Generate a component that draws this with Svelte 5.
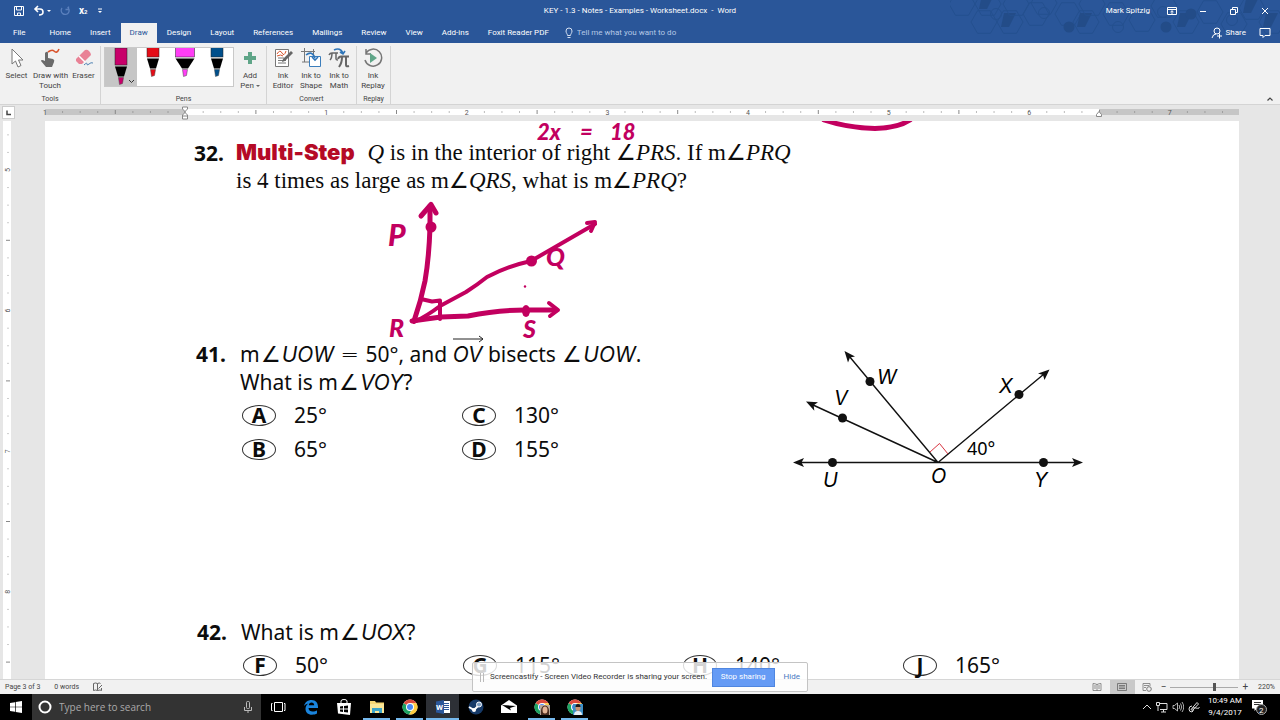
<script>
  const tabs = ['File', 'Home', 'Insert', 'Draw', 'Design', 'Layout', 'References', 'Mailings', 'Review', 'View', 'Add-ins', 'Foxit Reader PDF'];
  const pens = [
    { name: 'Pink pen', color: '#c8006a', w: 12, picked: true },
    { name: 'Red pen', color: '#e30d17', w: 12 },
    { name: 'Pink highlighter', color: '#ff3df5', w: 19 },
    { name: 'Blue pen', color: '#004f8b', w: 12 }
  ];
  const inch = 140.6;
  const hTicks = Array.from({ length: 68 }, (_, i) => ({ i, x: (i * inch) / 8 }));
  const vTicks = Array.from({ length: 32 }, (_, i) => ({ i, y: 49 + ((i - 3) * inch) / 8 }));
  const answers41 = [['A', '25°'], ['C', '130°'], ['B', '65°'], ['D', '155°']];
  const answers42 = [['F', '50°'], ['G', '115°'], ['H', '140°'], ['J', '165°']];
  const hexes = [
    [962, 4, 0], [984, 22, 0], [988, 4, 1], [1010, 22, 1], [1016, 4, 0], [1036, 14, 0], [1044, 3, 0], [1068, 14, 0],
    [1086, 22, 1], [1092, 4, 0], [1116, 14, 0], [1142, 20, 0], [1164, 6, 0], [1186, 22, 1], [1210, 12, 0], [1234, 24, 0], [1252, 8, 1], [1272, 22, 1]
  ];
  const hex = (x, y, r) => `M${x - r} ${y}l${r / 2} ${-r * 0.87}h${r}l${r / 2} ${r * 0.87}l${-r / 2} ${r * 0.87}h${-r}z`;
  let zoom = $state(65);
</script>

{#snippet chrome()}
  <circle cx="9" cy="9" r="7.5" fill="#fff" />
  <path d="M9 9 2.6 5.2A7.5 7.5 0 0 1 15.5 5.3H9z" fill="#dd4b3e" />
  <path d="M9 9 2.5 5.2A7.5 7.5 0 0 0 8.2 16.5L11 11z" fill="#1da362" />
  <path d="M9 5.3h6.5A7.5 7.5 0 0 1 8.2 16.5l3.4-5.8z" fill="#ffcd40" />
  <circle cx="9" cy="9" r="4" fill="#fff" /><circle cx="9" cy="9" r="3" fill="#4a8af4" />
{/snippet}

<div class="app">
  <header>
    <svg class="pattern" viewBox="950 0 330 38" aria-hidden="true">
      {#each hexes as [x, y, filled]}
        <path d={hex(x, y, 13)} fill="none" stroke="#24508f" />
        {#if filled}<path d="M{x - 6} {y - 9}h12l-7 14h-8z" fill="#234c88" />{/if}
      {/each}
      {#each [[996, 14], [1044, 13], [1118, 27], [1163, 12], [1232, 20]] as [x, y]}
        <circle cx={x} cy={y} r="5.5" fill="none" stroke="#24508f" />
      {/each}
      {#each [[1069, 27], [1166, 27], [1191, 14]] as [x, y]}
        <circle cx={x} cy={y} r="5.5" fill="#234c88" />
      {/each}
    </svg>
    <div class="title">
      <div class="quick">
        <button aria-label="Save"><svg width="12" height="12" viewBox="0 0 12 12"><path d="M1.500 1.500h9v9h-9z M3.500 1.500v3.500h5V1.500 M4.500 10.500V8h3v2.500" fill="none" stroke="#fff" /></svg></button>
        <button aria-label="Undo"><svg width="18" height="12" viewBox="0 0 18 12"><path d="M2 4h5q3 0 3 3t-4 3M5 1 2 4l3 3" fill="none" stroke="#fff" stroke-width="1.6" /><path d="M14 5h4l-2 2z" fill="#fff" /></svg></button>
        <button aria-label="Repeat"><svg width="12" height="12" viewBox="0 0 12 12"><path d="M8.5 2.2A4 4 0 1 1 3 3M6.5 4.5h3v-3" fill="none" stroke="#5b80bd" stroke-width="1.3" /></svg></button>
        <button class="sub" aria-label="Subscript">x<small>2</small></button>
        <button aria-label="Customize"><svg width="8" height="12" viewBox="0 0 8 12"><path d="M2 4h4" stroke="#fff" /><path d="M2 6h4L4 8z" fill="#fff" /></svg></button>
      </div>
      <div class="name">KEY - 1.3 - Notes - Examples - Worksheet.docx&nbsp; - &nbsp;Word</div>
      <div class="win">
        <span>Mark Spitzig</span>
        <button aria-label="Ribbon options"><svg width="10" height="10" viewBox="0 0 10 10"><path d="M.5 1.5h9v7h-9zM.5 3.5h9M5 8V5M3.5 6 5 4.7 6.500 6" fill="none" stroke="#fff" /></svg></button>
        <button aria-label="Minimize"><svg width="10" height="10" viewBox="0 0 10 10"><path d="M2 5.500h6" stroke="#fff" /></svg></button>
        <button aria-label="Restore"><svg width="10" height="10" viewBox="0 0 10 10"><path d="M1.500 3.500h5v5h-5zM3.500 3V1.500h5v5H7" fill="none" stroke="#fff" /></svg></button>
        <button aria-label="Close"><svg width="10" height="10" viewBox="0 0 10 10"><path d="m2 2 6 6m0-6L2 8" stroke="#fff" /></svg></button>
      </div>
    </div>
    <nav>
      {#each tabs as tab}
        <button class="tab" class:active={tab === 'Draw'} class:file={tab === 'File'}>{tab}</button>
      {/each}
      <label class="tell">
        <svg width="8" height="12" viewBox="0 0 8 12"><path d="M2.500 8.500C2.500 7 1 6 1 4a3 3 0 0 1 6 0c0 2-1.500 3-1.500 4.500zM2.500 10.500h3" fill="none" stroke="#d5e0f2" /></svg>
        <input aria-label="Tell me what you want to do" placeholder="Tell me what you want to do" />
      </label>
      <button class="share"><svg width="12" height="12" viewBox="0 0 12 12"><circle cx="6" cy="4" r="3" fill="none" stroke="#fff" /><path d="M1 11q1-4 4-4M6 9h5M8.500 6.500v5" fill="none" stroke="#fff" /></svg>Share</button>
      <button class="comment" aria-label="Comments"><svg width="12" height="12" viewBox="0 0 12 12"><path d="M1 1.500h10v7H6L4 10.500v-2H1z" fill="none" stroke="#fff" /></svg></button>
    </nav>
  </header>

  <section class="ribbon" aria-label="Draw tools">
    <div class="group tools">
      <div class="items">
        <button><svg width="20" height="20" viewBox="0 0 20 20"><path d="M5 1v15l3.500-3 2.500 6 3-1.500-2.500-5.500h4.500z" fill="#fff" stroke="#777" /></svg>Select</button>
        <button><svg width="20" height="20" viewBox="0 0 20 20"><path d="M8 4q4-3 6-1 3 3 5-2" fill="none" stroke="#d9532c" stroke-width="1.600" /><path d="M6 4q2-1 2 1v5l5 1q2 1 1 3l-2 5H6l-5-6q0-2 4 0V5z" fill="#6b6b6b" /></svg>Draw with<br />Touch</button>
        <button><svg width="20" height="20" viewBox="0 0 20 20"><path d="m2 11 9-9q2-1 4 1t2 4l-9 9H5l-3-3z" fill="#e98296" /><path d="m5 8 6 6" stroke="#fff" stroke-width="1.500" /><path d="M10 17q3-3 3-1t2 0 4-1" fill="none" stroke="#5285b5" /></svg>Eraser</button>
      </div>
      <h2>Tools</h2>
    </div>
    <div class="group pens">
      <div class="items">
        <div class="gallery">
          {#each pens as p}
            <button class:picked={p.picked} aria-label={p.name}>
              <svg width="32" height="38" viewBox="0 0 32 38">
                <g transform="translate(16 {p.picked ? 8 : 0})">
                  <rect x={-p.w / 2} y="-8" width={p.w} height="17" fill={p.color} stroke="#222" stroke-width=".5" />
                  <path d="M{-p.w / 2} 10.500h{p.w}L3 20.500h-6z" fill="#000" />
                  <path d="M-2.500 21.500h5l-1 6-3 1z" fill={p.color} stroke="#444" stroke-width=".5" />
                </g>
                {#if p.picked}<path d="m24 32 2.500 2.500L29 32" fill="none" stroke="#333" />{/if}
              </svg>
            </button>
          {/each}
        </div>
        <button><svg width="20" height="20" viewBox="0 0 20 20"><path d="M8 4h4v4h4v4h-4v4H8v-4H4V8h4z" fill="#5fa588" /></svg>Add<br />Pen <i class="caret"></i></button>
      </div>
      <h2>Pens</h2>
    </div>
    <div class="group convert">
      <div class="items">
        <button><svg width="20" height="20" viewBox="0 0 20 20"><path d="M2.500 1.500h13v17h-13zM5 10h6M5 12.500h8M5 15h8" fill="#fff" stroke="#777" /><path d="M4 6q3-5 5-1t4-2M4 8q4-2 6 0" fill="none" stroke="#d9532c" /><path d="m9 14 1-3 8-8 2 2-8 8z" fill="#666" /></svg>Ink<br />Editor</button>
        <button><svg width="20" height="20" viewBox="0 0 20 20"><path d="M3.500 0v14M0 3.500h14M12.500 1v13H1" fill="none" stroke="#777" /><path d="M8.500 8.500h11v10h-11z" fill="#fff" stroke="#3c7ebc" /><path d="M5 7q6-5 9 3M11 9l3 3 3-3" fill="none" stroke="#2f75b8" stroke-width="1.600" /></svg>Ink to<br />Shape</button>
        <button><svg width="22" height="20" viewBox="0 0 22 20"><path d="M1 7q1-2 3-2h6M4 5q0 5-2 7M8 5v6q0 1 2 1" fill="none" stroke="#666" stroke-width="1.500" /><path d="M10 11q1-2.500 3-2.500h8M14 9q0 6-3 10M18 9v8q0 2 3 1" fill="none" stroke="#666" stroke-width="2" /><path d="M6 2q6-3 9 3M12 4l3 2 2-3" fill="none" stroke="#2f75b8" stroke-width="1.600" /></svg>Ink to<br />Math</button>
      </div>
      <h2>Convert</h2>
    </div>
    <div class="group replay">
      <div class="items">
        <button><svg width="20" height="20" viewBox="0 0 20 20"><path d="M3 5a8.500 8.500 0 1 1-1 7M3 1v5h5" fill="none" stroke="#777" stroke-width="1.500" /><path d="m7 5 7 5-7 5z" fill="#5fa588" /></svg>Ink<br />Replay</button>
      </div>
      <h2>Replay</h2>
    </div>
    <button class="collapse" aria-label="Collapse the ribbon"><svg width="8" height="6" viewBox="0 0 8 6"><path d="m1.500 4.500 2.500-2.500 2.500 2.500" fill="none" stroke="#444" stroke-width="1.200" /></svg></button>
  </section>

  <div class="rulerrow">
    <button class="corner" aria-label="Tab stop"><svg width="11" height="11" viewBox="0 0 11 11"><path d="M4 3.500v4h4" fill="none" stroke="#444" stroke-width="1.500" /></svg></button>
    <div class="hruler">
      <svg width="1194" height="16" viewBox="0 0 1194 16" aria-label="Horizontal ruler">
        <path d="M0 4h1194v6H0z" fill="#c6c6c6" /><path d="M140 4h914v6H140z" fill="#fff" />
        {#each hTicks as t}
          {#if t.i % 8 === 0}
            <text x={t.x} y="10" text-anchor="middle">{Math.abs(t.i / 8 - 1) || ''}</text>
          {:else if t.i % 4 === 0}
            <path d="M{t.x} 5v4" stroke="#888" />
          {:else}
            <path d="M{t.x} 6.500v1" stroke="#777" />
          {/if}
        {/each}
        <path d="M137.500 2v2l3 3-3 3v4h5v-4l-3-3 3-3V2zM137.500 11h5M1051.500 11.500v-2l2.500-3 2.500 3v2z" fill="#fff" stroke="#888" />
      </svg>
    </div>
  </div>

  <main>
    <div class="vruler">
      <svg width="8" height="558" viewBox="0 0 8 558" aria-label="Vertical ruler">
        <path d="M0 0h8v558H0z" fill="#fff" />
        {#each vTicks as t}
          {#if (t.i - 3) % 8 === 0}
            <text transform="translate(7 {t.y}) rotate(-90)" text-anchor="middle">{5 + (t.i - 3) / 8}</text>
          {:else if (t.i - 3) % 4 === 0}
            <path d="M3 {t.y}h4" stroke="#888" />
          {:else}
            <path d="M4.500 {t.y}h1" stroke="#999" />
          {/if}
        {/each}
      </svg>
    </div>
    <article>
      <section class="q32">
        <b class="num">32.</b>
        <p><b class="multi">Multi-Step</b> <i>Q</i> is in the interior of right <span class="ang">∠</span><i>PRS</i>. If m<span class="ang">∠</span><i>PRQ</i><br />is 4 times as large as m<span class="ang">∠</span><i>QRS</i>, what is m<span class="ang">∠</span><i>PRQ</i>?</p>
      </section>

      <section class="q41">
        <div class="question">
          <b class="num">41.</b>
          <div>
            <p>m<span class="ang">∠</span><i>UOW</i> <span class="ang">=</span> 50°, and <span class="ray"><i>OV</i><svg width="32" height="8" viewBox="0 0 32 8"><path d="M0 4h30M26 1l4 3-4 3" fill="none" stroke="#222" /></svg></span> bisects <span class="ang">∠</span><i>UOW</i>.<br />What is m<span class="ang">∠</span><i>VOY</i>?</p>
            <div class="answers">
              {#each answers41 as [letter, value]}
                <div class="answer"><b>{letter}</b><span>{value}</span></div>
              {/each}
            </div>
          </div>
        </div>
        <svg class="figure" width="320" height="160" viewBox="780 340 320 160" role="img" aria-label="Rays U, V, W, X and Y from point O">
          <g stroke="#111" stroke-width="1.400" fill="none">
            <path d="M800 462.500h276M938 462.500 812 404.500M938 462.500 849 356M938 462.500 1044 374" />
          </g>
          <g fill="#111">
            <path d="M793 462.500l11-4.500-2.500 4.500 2.500 4.500z" />
            <path d="M1083 462.500l-11-4.500 2.500 4.500-2.500 4.500z" />
            <path d="M806 401.500l12 .800-4.300 3 .600 5.500z" />
            <path d="M844.500 351l10.500 5.500-5 1-2 5z" />
            <path d="M1049.500 369.500l-5 10.500-1.500-5-5-1.500z" />
            <circle cx="832.500" cy="462.500" r="4.500" /><circle cx="842.500" cy="418" r="4.500" /><circle cx="870" cy="381.500" r="4.500" />
            <circle cx="1019" cy="394.500" r="4.500" /><circle cx="1043.500" cy="462.500" r="4.500" />
          </g>
          <path d="m930 452 9.500-8.500 8.500 10.500" fill="none" stroke="#d8333f" />
          <g class="labels"><text x="823" y="487">U</text><text x="834" y="405">V</text><text x="877" y="384">W</text><text x="999" y="393">X</text><text x="931" y="483">O</text><text x="1034" y="487">Y</text></g>
          <text class="deg" x="967" y="455">40°</text>
        </svg>
      </section>

      <section class="q42">
        <b class="num">42.</b>
        <div>
          <p>What is m<span class="ang">∠</span><i>UOX</i>?</p>
          <div class="answers">
            {#each answers42 as [letter, value]}
              <div class="answer"><b>{letter}</b><span>{value}</span></div>
            {/each}
          </div>
        </div>
      </section>

      <svg class="ink" width="1194" height="558" viewBox="45 121 1194 558" role="img" aria-label="Ink drawing">
        <g fill="none" stroke="#c2005f" stroke-width="5" stroke-linecap="round" stroke-linejoin="round">
          <path d="M824 120Q848 128 875 128.500 898 128 910 120" />
          <path d="M430 206V227Q429 258 425 281 421 301 414 321" />
          <path d="M421 216 431 204.500 436 213" />
          <path d="M414 322Q427 316 440 306L466 292Q477 285 487 277 508 266 531 261L595 224" stroke-width="4" />
          <path d="m587 223 8-1-4 9" stroke-width="4" />
          <path d="M412 321Q426 319 441 317L468 316Q498 310 525 310H556" />
          <path d="m549 303 9 7-8 6" stroke-width="4" />
          <path d="M421 299 432 301.500 440 300.500V319" stroke-width="4" />
        </g>
        <g fill="#c2005f">
          <circle cx="431" cy="227" r="5.500" /><circle cx="531.500" cy="261" r="5.500" /><ellipse cx="526" cy="311" rx="4" ry="6" /><circle cx="525" cy="286.500" r="1.200" />
          <text x="537" y="140">2x</text><text x="580" y="140">=</text><text x="610" y="140">18</text>
          <text class="big" x="388" y="246">P</text><text class="mid" x="389" y="337">R</text><text class="mid" x="546" y="266">Q</text><text class="mid" x="523" y="338">S</text>
        </g>
      </svg>
    </article>
    <aside class="sharing">
      <i class="grip"></i>
      <span>Screencastify - Screen Video Recorder is sharing your screen.</span>
      <button>Stop sharing</button>
      <a href="#hide">Hide</a>
    </aside>
  </main>

  <footer class="status">
    <span>Page 3 of 3</span><span>0 words</span>
    <button aria-label="Proofing"><svg width="10" height="10" viewBox="0 0 10 10"><path d="M.500 1.500q2-1 4 0v7q-2-1-4 0zM4.500 1.500q2-1 3 0M4.500 8.500q3-1 4 0V6M9 3 5.500 6.500" fill="none" stroke="#666" /></svg></button>
    <div class="views">
      <button aria-label="Read mode"><svg width="10" height="10" viewBox="0 0 10 10"><path d="M1 1.500q2 0 4 1 2-1 4-1v7H1zM5 2v7M2 4h2M2 6h2M6 4h2M6 6h2" fill="none" stroke="#777" stroke-width=".8" /></svg></button>
      <button class="on" aria-label="Print layout"><svg width="10" height="10" viewBox="0 0 10 10"><path d="M.500 1.500h9v7h-9zM2 3.500h6M2 5h6M2 6.500h6" fill="none" stroke="#666" stroke-width=".8" /></svg></button>
      <button aria-label="Web layout"><svg width="10" height="10" viewBox="0 0 10 10"><path d="M8 4V1.500H1v7h3M2 3.500h5M2 5.500h2" fill="none" stroke="#777" stroke-width=".8" /><circle cx="7" cy="7" r="2.300" fill="none" stroke="#777" /></svg></button>
      <div class="zoom"><button>−</button><input type="range" min="0" max="100" bind:value={zoom} aria-label="Zoom" /><button>+</button></div>
      <span class="pct">220%</span>
    </div>
  </footer>

  <div class="taskbar">
    <button class="start" aria-label="Start"><svg width="12" height="12" viewBox="0 0 12 12"><path d="M0 2l5-.8v4.500H0zM5.700 1 12 0v5.700H5.700zM0 6.300h5v4.500L0 10zM5.700 6.300H12V12l-6.300-1z" fill="#fff" /></svg></button>
    <label class="search">
      <svg width="14" height="14" viewBox="0 0 14 14"><circle cx="7" cy="7" r="5.500" fill="none" stroke="#fff" stroke-width="2" /></svg>
      <input placeholder="Type here to search" aria-label="Search" />
      <svg width="8" height="12" viewBox="0 0 8 12"><rect x="2.500" y=".500" width="3" height="7" rx="1" fill="none" stroke="#bbb" /><path d="M.500 6v3.500h7V6M4 9.500V12" fill="none" stroke="#bbb" /></svg>
    </label>
    <button class="app-item" aria-label="Task view"><svg width="18" height="18" viewBox="0 0 18 18"><path d="M5.500 4.500h8v9h-8zM3.500 5.500h-1v7h1M15 5.500h1v7h-1" fill="none" stroke="#fff" /></svg></button>
    <button class="app-item" aria-label="Edge"><svg width="18" height="18" viewBox="0 0 18 18"><path d="M2 8C3 4 6 2 9.500 2c4.500 0 6.500 3 6.500 7v1H6.500c0 2.500 2 3.500 4 3.500 2 0 3.500-.5 4.500-1v3c-1.500.8-3 1.200-5 1.200-4 0-6.500-2.200-6.500-6 0-2 1-4 3-5.200C4 6 3 7 2 8zm4.800-.8h5.400C12.200 5.500 11 4.500 9.600 4.500 8 4.500 7 5.500 6.800 7.200z" fill="#1a84dc" /></svg></button>
    <button class="app-item" aria-label="Store"><svg width="18" height="18" viewBox="0 0 18 18"><path d="M2 5h14l-1 12-12-1.500z" fill="#fff" /><path d="M6 7V3q0-1.500 3-1.500T12 3v2" fill="none" stroke="#fff" /><path d="M5 8.500l3-.5v2.500H5zM9 8l4-.5v3H9zM5 11.500h3V14l-3-.5zM9 11.500h4v3L9 14z" fill="#000" /></svg></button>
    <button class="app-item open" aria-label="File Explorer"><svg width="18" height="18" viewBox="0 0 18 18"><path d="M2 3h5l1 1.500h8V15H2z" fill="#f7d774" /><path d="M2 6h14v9H2z" fill="#fbe798" /><path d="M4 10h10v5h-3v-2H7v2H4z" fill="#3da5c9" /></svg></button>
    <button class="app-item open" aria-label="Chrome"><svg width="18" height="18" viewBox="0 0 18 18">{@render chrome()}</svg></button>
    <button class="app-item open current" aria-label="Word"><svg width="18" height="18" viewBox="0 0 18 18"><path d="M9 3h7v12H9z" fill="#fff" /><path d="M10 5.500h5M10 7.500h5M10 9.500h5M10 11.500h5" stroke="#2b579a" /><path d="m2 3.500 8-1.500v14l-8-1.500z" fill="#2b579a" /><text class="w" x="2" y="12">W</text></svg></button>
    <button class="app-item" aria-label="Steam"><svg width="18" height="18" viewBox="0 0 18 18"><circle cx="9" cy="9" r="7.500" fill="#163a68" /><path d="m2 9 5 3 5-5" fill="none" stroke="#fff" stroke-width="2" /><circle cx="12" cy="6.500" r="2.500" fill="#7b9cc0" stroke="#fff" /><circle cx="7" cy="12" r="2" fill="#fff" /></svg></button>
    <button class="app-item" aria-label="Mail"><svg width="18" height="18" viewBox="0 0 18 18"><path d="M1 7.500 9 2l8 5.500V15H1z" fill="#fff" /><path d="m2 7 14 1-6 2 1 2.500z" fill="#000" /></svg></button>
    <button class="app-item open" aria-label="Chrome profile one"><svg width="18" height="18" viewBox="0 0 18 18">{@render chrome()}<path d="M7 7h10v10H7z" fill="#b9a99b" /><path d="M8 17q-1-9 4-9.500 5 .500 4 9.500z" fill="#4b2b1f" /><ellipse cx="12" cy="12" rx="2.500" ry="3.500" fill="#e6b596" /></svg></button>
    <button class="app-item open" aria-label="Chrome profile two"><svg width="18" height="18" viewBox="0 0 18 18">{@render chrome()}<path d="M7 6h10v11H7z" fill="#3d8fc7" /><path d="M8 17q0-4 4-4t4 4z" fill="#e8eef4" /><ellipse cx="12" cy="10" rx="2.500" ry="3" fill="#c89372" /><path d="M9.500 9q0-3 2.500-3t2.500 3z" fill="#231a18" /></svg></button>
    <div class="tray">
      <svg width="10" height="12" viewBox="0 0 10 12"><path d="m1 8 4-4 4 4" fill="none" stroke="#ddd" /></svg>
      <svg width="12" height="12" viewBox="0 0 12 12"><path d="M4 2.500h7v6H4M7.500 8.500V11M5 11h5M.500 1.500h3v3h-3zM2 5v5" fill="none" stroke="#ddd" /></svg>
      <svg width="12" height="12" viewBox="0 0 12 12"><path d="M1 4.500h1.500l3-2.500v8l-3-2.500H1zM7 4q1.500 2 0 4M8.500 2.500q2.500 3.500 0 7M10 1q3.500 5 0 10" fill="none" stroke="#ddd" stroke-width=".8" /></svg>
      <svg width="12" height="12" viewBox="0 0 12 12"><path d="M3 8.500 9 1.500l1.500 1.500-6 6.500zM4 5Q1 5 1 8t3 3q2-1 1-3t3-1 3-1" fill="none" stroke="#ddd" /></svg>
      <time>10:49 AM<br />9/4/2017</time>
      <svg class="note" width="18" height="18" viewBox="0 0 18 18"><path d="M2 2h11v8.500H7L4.500 13v-2.500H2z" fill="#fff" /><path d="M4 4.500h7M4 6.500h7" stroke="#000" stroke-width=".8" /><circle cx="11.500" cy="11.500" r="5" fill="#222" stroke="#aaa" /><text x="9" y="14.500">2</text></svg>
    </div>
  </div>
</div>

<style>
  :global(body) { margin: 0; }
  * { box-sizing: border-box; }
  .app { height: 100vh; display: flex; flex-direction: column; overflow: hidden; font: 8px/10px Roboto, "Open Sans", sans-serif; color: #444; }
  button { border: 0; padding: 0; background: none; color: inherit; font: inherit; white-space: nowrap; }
  input { border: 0; padding: 0; background: none; font: inherit; color: inherit; min-width: 0; outline: 0; }
  svg { display: block; flex: none; }
  p, h2 { margin: 0; font-weight: normal; }

  header { position: relative; background: #2a5699; color: #fff; flex: none; }
  .pattern { position: absolute; right: 0; top: 0; width: 330px; height: 38px; }
  .title { position: relative; height: 23px; display: grid; grid-template-columns: 1fr auto 1fr; align-items: center; padding-bottom: 1px; }
  .quick { display: flex; align-items: center; gap: 8px; padding-left: 13px; }
  .sub { font-weight: bold; font-size: 10px; }
  .sub small { font-size: 6px; }
  .win { display: flex; justify-content: flex-end; align-items: center; gap: 21px; padding-right: 10px; }
  .win span { margin-right: -4px; }
  nav { position: relative; display: flex; height: 20px; align-items: stretch; }
  .tab { padding: 0 9px; margin-right: 1px; }
  .tab.file { padding: 0 14px 0 13px; }
  .tab.active { background: #f1f1f1; color: #2a5699; }
  .tell { display: flex; align-items: center; gap: 4px; margin-left: 6px; flex: 1; }
  .tell input { flex: 1; }
  .tell input::placeholder { color: #b5c8e6; opacity: 1; }
  .share { display: flex; align-items: center; gap: 3px; }
  .comment { padding: 0 9px 0 13px; }

  .ribbon { display: flex; height: 62px; flex: none; background: #f1f1f1; border-bottom: 1px solid #d4d4d4; padding: 3px 0 0; }
  .group { display: flex; flex-direction: column; justify-content: space-between; border-right: 1px solid #d4d4d4; }
  .items { display: flex; align-items: flex-start; }
  .group h2 { font-size: 7px; line-height: 9px; text-align: center; }
  .items > button { width: 28px; padding-top: 2px; line-height: 10px; text-align: center; }
  .items > button svg { margin: 0 auto 3px; }
  .tools { width: 101px; }
  .tools .items > button { width: 33px; }
  .tools .items > button:nth-child(2) { width: 34px; }
  .pens { width: 166px; }
  .pens .items { padding-left: 3px; }
  .pens .items > button { width: 32px; }
  .gallery { display: flex; width: 130px; height: 40px; margin-top: 1px; background: #fff; border: 1px solid #c9c9c9; }
  .gallery button { width: 32px; }
  .gallery .picked { background: #c6c6c6; }
  .caret { display: inline-block; border: 2px solid transparent; border-top-color: #666; border-bottom: 0; vertical-align: middle; }
  .convert { width: 90px; }
  .convert .items { padding-left: 2px; }
  .replay { width: 34px; }
  .replay .items { padding-left: 2px; }
  .collapse { margin-left: auto; align-self: flex-end; padding: 0 6px 2px 0; }

  .rulerrow { display: flex; height: 16px; flex: none; background: #e6e6e6; }
  .corner { width: 13px; height: 13px; margin: 1px 0 0 2px; border: 1px solid #ccc; background: #fff; }
  .hruler { flex: 1; min-width: 0; margin-left: 30px; }
  .hruler svg { overflow: visible; }
  .hruler text, .vruler text { font-size: 7px; fill: #555; }
  main { position: relative; z-index: 1; flex: 1; min-height: 0; display: flex; background: #e6e6e6; }
  .vruler { padding: 0 34px 0 3px; }
  article { position: relative; flex: 1; min-width: 0; margin-right: 41px; background: #fff; color: #0c0c0c; font: 21px/28px "Noto Sans", "Open Sans", sans-serif; overflow: hidden; }
  .ang { font-family: "DejaVu Sans", sans-serif; font-size: 22px; font-weight: 200; line-height: 20px; }
  .num { font-weight: 700; }
  .q32 { display: grid; grid-template-columns: 42px 1fr; padding: 18px 0 0 149px; }
  .q32 p { font: 23px/28px "Liberation Serif", serif; white-space: nowrap; }
  .multi { font: 900 22px/27px Inter, sans-serif; color: #b50a26; margin-right: 7px; }
  .q41 { display: flex; justify-content: space-between; padding: 145px 139px 0 151px; }
  .question, .q42 { display: grid; grid-template-columns: 44px 1fr; }
  .q41 p, .q42 p { white-space: nowrap; }
  .q41 i, .q42 i { font-family: Inter, sans-serif; line-height: 20px; }
  .q41 .ang, .q42 .ang { padding: 0 1px; }
  .ray { position: relative; }
  .ray svg { position: absolute; left: 0; top: -5px; }
  .answers { display: grid; grid-template-columns: 220px 220px; padding: 2px 0 0 2px; }
  .answer { display: flex; align-items: center; gap: 18px; height: 34px; }
  .answer b { width: 34px; height: 21px; border: 1px solid #333; border-radius: 50%; text-align: center; line-height: 18px; }
  .figure { font-size: 20px; }
  .labels { font-family: Inter, sans-serif; font-style: italic; }
  .deg { font-size: 18px; }
  .q42 { padding: 118px 0 0 152px; }
  .q42 .answers { grid-template-columns: repeat(4, 220px); }
  .ink { position: absolute; left: 0; top: 0; font: italic 900 22px/20px Lato, sans-serif; }
  .ink .mid { font-size: 25px; }
  .ink .big { font-size: 30px; }

  .sharing { position: absolute; left: 472px; bottom: -13px; width: 336px; height: 30px; display: flex; align-items: center; background: rgba(255, 255, 255, .82); border: 1px solid #c4c4c4; border-radius: 2px; padding: 0 7px; color: #333; }
  .grip { width: 4px; height: 9px; border: 1px solid #bbb; border-width: 0 1px; margin-right: 6px; }
  .sharing span { flex: 1; white-space: nowrap; }
  .sharing button { width: 63px; height: 19px; background: #659bf5; border: 1px solid #4f86e0; color: #fff; margin-right: 9px; }
  .sharing a { color: #4a78c2; text-decoration: none; }

  .status { display: flex; align-items: center; height: 15px; flex: none; background: #f1f1f1; border-top: 1px solid #d6d6d6; padding-left: 5px; gap: 14px; font-size: 7px; }
  .views { display: flex; align-items: center; align-self: stretch; margin-left: auto; padding-right: 5px; }
  .views > button { width: 25px; height: 100%; display: grid; place-items: center; }
  .views .on { background: #c9c9c9; }
  .zoom { display: flex; align-items: center; gap: 2px; font-size: 10px; padding: 0 10px 0 1px; }
  .zoom input { appearance: none; width: 68px; height: 9px; background: linear-gradient(#aaa, #aaa) center / 100% 1px no-repeat; }
  .zoom input::-webkit-slider-thumb { appearance: none; width: 3px; height: 8px; background: #555; }

  .taskbar { display: flex; height: 26px; flex: none; background: #000; color: #fff; }
  .start { width: 32px; display: grid; place-items: center; }
  .search { width: 229px; background: #333; display: flex; align-items: center; padding: 0 9px 0 6px; gap: 7px; }
  .search input { flex: 1; font: 10px/14px "Open Sans", sans-serif; }
  .search input::placeholder { color: #aaa; opacity: 1; }
  .app-item { width: 33px; display: grid; place-items: center; }
  .open { background: linear-gradient(#76b9ed, #76b9ed) center bottom / 27px 2px no-repeat; }
  .current { background: linear-gradient(#76b9ed, #76b9ed) center bottom / 100% 2px no-repeat #2d3036; }
  .w { font-size: 8px; font-weight: bold; fill: #fff; }
  .tray { margin-left: auto; display: flex; align-items: center; gap: 4px; padding-right: 12px; }
  time { width: 42px; text-align: center; line-height: 12px; }
  .note text { font-size: 8px; fill: #fff; }
</style>
